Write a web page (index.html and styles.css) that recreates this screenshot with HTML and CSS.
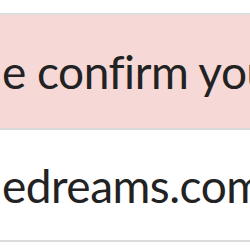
FILE: index.html
```html
<!DOCTYPE html>
<html lang="en">
<head>
    <meta charset="UTF-8">
    <title>Confirm email</title>
    <link rel="stylesheet" href="styles.css">
</head>
<body>
    <div class="page">
        <div class="notice">e confirm your</div>
        <div class="email-row">edreams.com</div>
    </div>
</body>
</html>
```

FILE: styles.css
```css
body {
    margin: 0;
    background: #fff;
    font-family: Lato, "Open Sans", sans-serif;
    color: #222;
}
.page {
    padding-top: 13px;
    overflow: hidden;
    width: 250px;
}
.notice,
.email-row {
    display: flex;
    align-items: center;
    box-sizing: border-box;
    padding-left: 2px;
    font-size: 46px;
    letter-spacing: -0.5px;
    white-space: nowrap;
}
.notice {
    background: #f6d9d7;
    border-top: 2px solid #dcdcdc;
    border-bottom: 2px solid #d9d9dc;
    height: 117px;
}
.email-row {
    border-bottom: 2px solid #dcdcdc;
    height: 112px;
}
```
